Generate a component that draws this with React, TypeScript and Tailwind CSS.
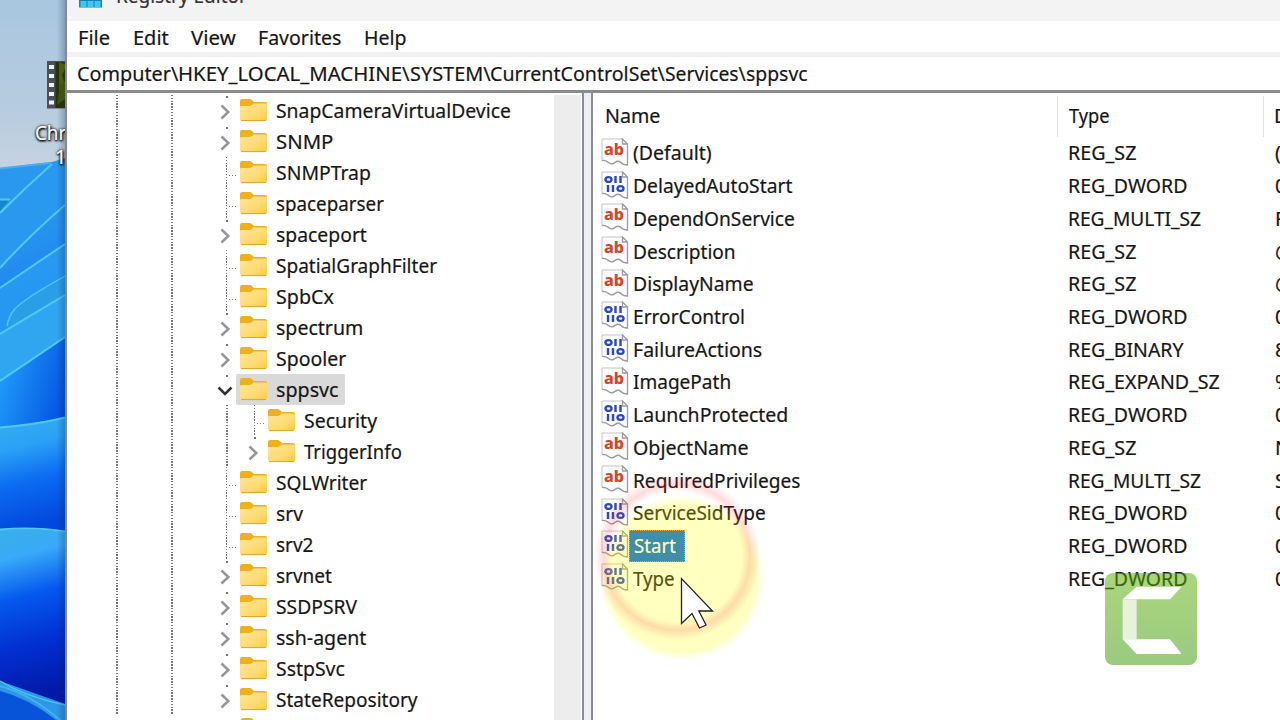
import { useLayoutEffect, useRef } from "react";
import clsx from "clsx";

type TreeItem = {
  label: string;
  width: number;
  state?: "closed" | "open";
  nested?: boolean;
  selected?: boolean;
};

const TREE: TreeItem[] = [
  { label: "SnapCameraVirtualDevice", width: 235, state: "closed" },
  { label: "SNMP", width: 57, state: "closed" },
  { label: "SNMPTrap", width: 95 },
  { label: "spaceparser", width: 108 },
  { label: "spaceport", width: 91, state: "closed" },
  { label: "SpatialGraphFilter", width: 161 },
  { label: "SpbCx", width: 58 },
  { label: "spectrum", width: 87, state: "closed" },
  { label: "Spooler", width: 70, state: "closed" },
  { label: "sppsvc", width: 63, state: "open", selected: true },
  { label: "Security", width: 73, nested: true },
  { label: "TriggerInfo", width: 98, state: "closed", nested: true },
  { label: "SQLWriter", width: 91 },
  { label: "srv", width: 27 },
  { label: "srv2", width: 37 },
  { label: "srvnet", width: 56, state: "closed" },
  { label: "SSDPSRV", width: 81, state: "closed" },
  { label: "ssh-agent", width: 90, state: "closed" },
  { label: "SstpSvc", width: 69, state: "closed" },
  { label: "StateRepository", width: 142, state: "closed" },
];

const TYPE_WIDTHS: Record<string, number> = {
  REG_SZ: 68,
  REG_DWORD: 119,
  REG_MULTI_SZ: 133,
  REG_EXPAND_SZ: 152,
  REG_BINARY: 116,
};

const VALUES = [
  { name: "(Default)", width: 79, type: "REG_SZ", data: "(" },
  { name: "DelayedAutoStart", width: 159, type: "REG_DWORD", data: "0" },
  { name: "DependOnService", width: 162, type: "REG_MULTI_SZ", data: "R" },
  { name: "Description", width: 103, type: "REG_SZ", data: "@" },
  { name: "DisplayName", width: 121, type: "REG_SZ", data: "@" },
  { name: "ErrorControl", width: 112, type: "REG_DWORD", data: "0" },
  { name: "FailureActions", width: 129, type: "REG_BINARY", data: "8" },
  { name: "ImagePath", width: 98, type: "REG_EXPAND_SZ", data: "%" },
  { name: "LaunchProtected", width: 155, type: "REG_DWORD", data: "0" },
  { name: "ObjectName", width: 116, type: "REG_SZ", data: "N" },
  { name: "RequiredPrivileges", width: 167, type: "REG_MULTI_SZ", data: "S" },
  { name: "ServiceSidType", width: 133, type: "REG_DWORD", data: "0" },
  { name: "Start", width: 42, type: "REG_DWORD", data: "0" },
  { name: "Type", width: 42, type: "REG_DWORD", data: "0" },
];

const MENU = [
  { label: "File", width: 32, space: "w-[55px]" },
  { label: "Edit", width: 36, space: "w-[58px]" },
  { label: "View", width: 45, space: "w-[67px]" },
  { label: "Favorites", width: 83, space: "w-[106px]" },
  { label: "Help", width: 43, space: "w-[43px]" },
];

const PATH = [
  { part: "Computer\\", width: 101 },
  { part: "HKEY_LOCAL_MACHINE\\", width: 232 },
  { part: "SYSTEM\\", width: 80.5 },
  { part: "CurrentControlSet\\", width: 174.5 },
  { part: "Services\\", width: 81 },
  { part: "sppsvc", width: 62 },
];

// Condenses a label horizontally so that it fills the given width
function FitText({ text, width }: { text: string; width: number }) {
  const ref = useRef<HTMLSpanElement>(null);

  useLayoutEffect(() => {
    const el = ref.current;
    if (!el) return;
    el.style.transform = `scaleX(${width / el.offsetWidth})`;
  }, [text, width]);

  return (
    <span className="block shrink-0" style={{ width }}>
      <span ref={ref} className="inline-block origin-left whitespace-pre">
        {text}
      </span>
    </span>
  );
}

function Wallpaper() {
  return (
    <svg
      className="absolute inset-0"
      width="65"
      height="720"
      viewBox="0 0 65 720"
    >
      <defs>
        <linearGradient id="sky" x1="0" y1="0" x2="0" y2="1">
          <stop offset="0" stopColor="#a9c6df" />
          <stop offset="0.15" stopColor="#b6cce0" />
          <stop offset="0.23" stopColor="#c6d2e0" />
        </linearGradient>
        <linearGradient id="petal" x1="0" y1="0" x2="0.3" y2="1">
          <stop offset="0" stopColor="#2b98ee" />
          <stop offset="1" stopColor="#2498f4" />
        </linearGradient>
        <linearGradient id="petalSoft" x1="0" y1="0" x2="0.4" y2="1">
          <stop offset="0" stopColor="#2b9fec" />
          <stop offset="1" stopColor="#1f86f0" />
        </linearGradient>
        <linearGradient id="deep" x1="0" y1="0.4" x2="1" y2="0.8">
          <stop offset="0" stopColor="#209cfa" />
          <stop offset="1" stopColor="#0452e0" />
        </linearGradient>
        <linearGradient id="fold" x1="0" y1="0" x2="0.15" y2="1">
          <stop offset="0" stopColor="#36b0ee" />
          <stop offset="0.3" stopColor="#2ba0f6" />
          <stop offset="0.6" stopColor="#0c6cf2" />
          <stop offset="1" stopColor="#0348dc" />
        </linearGradient>
        <linearGradient id="foldDeep" x1="0" y1="0" x2="0.1" y2="1">
          <stop offset="0" stopColor="#3aafe6" />
          <stop offset="0.18" stopColor="#39aaf8" />
          <stop offset="0.42" stopColor="#0558ee" />
          <stop offset="0.7" stopColor="#0230d0" />
          <stop offset="1" stopColor="#0219a8" />
        </linearGradient>
        <linearGradient id="shade" x1="0" y1="0" x2="1" y2="0">
          <stop offset="0" stopColor="#0a2040" stopOpacity="0" />
          <stop offset="1" stopColor="#0a2040" stopOpacity="0.25" />
        </linearGradient>
      </defs>
      <rect width="65" height="720" fill="url(#sky)" />
      <path d="M0 168 L52 162 L65 158 V720 H0Z" fill="url(#petal)" />
      <path d="M0 199 H10 L0 211Z" fill="#1486cc" />
      <path d="M65 205 L0 268 V288 L65 244Z" fill="url(#petalSoft)" />
      <path d="M65 244 L0 288 V334 L65 295Z" fill="url(#petal)" />
      <path d="M65 276 Q18 300 12 312 Q8 318 7 330 L65 295Z" fill="#2a9fe8" />
      <path d="M65 295 L0 334 V381 L65 337Z" fill="#30a6f0" />
      <path d="M65 337 L0 381 V428 L65 418Z" fill="url(#deep)" />
      <path d="M0 428 Q40 424 65 418 V532 H0Z" fill="url(#fold)" />
      <path d="M0 530 Q35 527 65 532 V704 L0 681Z" fill="url(#foldDeep)" />
      <path d="M0 681 Q20 692 65 704 V720 H0Z" fill="#2f96e6" />
      <path d="M0 691 Q28 698 56 720 H0Z" fill="#0754d8" />
      <g fill="none" stroke="#50c8f6" strokeWidth="2">
        <path d="M0 168.5 L50 163" stroke="#45b2f0" />
        <path d="M0 199.5 H10" />
        <path d="M52 164 Q26 187 0 213" />
        <path d="M65 205 Q28 237 0 268" />
        <path d="M65 244 L0 288" />
        <path d="M65 276 Q22 300 14 310 Q9 316 7 326" strokeWidth="1.4" />
        <path d="M65 295 L0 334" />
        <path d="M65 337 L0 381" />
        <path d="M0 427.5 Q40 424 65 417.5" />
        <path d="M0 529.5 Q35 526.5 65 531.5" />
        <path d="M0 681 Q24 696 65 705" strokeWidth="1.4" />
        <path d="M0 686 Q30 694 60 720" strokeWidth="2" stroke="#3fb2ee" />
      </g>
      <rect x="57" width="8" height="720" fill="url(#shade)" />
    </svg>
  );
}

function DesktopIcon() {
  return (
    <div className="absolute left-[35px] top-[61px] w-[30px] text-white [text-shadow:1px_1px_3px_#000,0_0_3px_#000,0_1px_2px_#000]">
      <svg className="ml-3" width="36" height="48" viewBox="0 0 36 48">
        <rect width="36" height="47.5" fill="#4a5054" />
        <rect x="8.5" y="1" width="28" height="46" fill="#27330c" />
        <path d="M12 1 L20 4 L15 14 L18 24 L12 30Z" fill="#4c5c12" />
        <path d="M13 24 L18 20 V38 L10 44Z" fill="#3f520f" />
        {[4, 13, 22, 31, 39.5].map((y) => (
          <rect key={y} x="2" y={y} width="5" height="4" fill="#f4f4f4" />
        ))}
      </svg>
      <div className="mt-3 h-6 leading-6">
        <FitText text="Chr" width={31} />
      </div>
      <div className="ml-5 h-6 leading-6">1</div>
    </div>
  );
}

function Folder() {
  return (
    <svg
      className="-mt-[2px] ml-[2.5px] shrink-0"
      width="29"
      height="24"
      viewBox="0 0 29 24"
    >
      <defs>
        <linearGradient id="folder" x1="0" y1="0" x2="1" y2="1">
          <stop offset="0" stopColor="#ffe59a" />
          <stop offset="0.6" stopColor="#fedb72" />
          <stop offset="1" stopColor="#fbc93c" />
        </linearGradient>
      </defs>
      <path
        d="M1 3 Q1 1 3 1 H10.5 Q12 1 13 2.2 L15 4 H26 Q28 4 28 6 V14 H1Z"
        fill="#f0b01e"
      />
      <path
        d="M1 9 Q1 8 2.5 8 H10.5 Q12 8 13 7 L14.5 5.5 H26.5 Q28 5.5 28 7 V21 Q28 23 26 23 H3 Q1 23 1 21Z"
        fill="url(#folder)"
      />
      <path d="M2 22.6 H27" stroke="#dba52a" strokeWidth="1" />
    </svg>
  );
}

function Chevron({ open }: { open: boolean }) {
  return (
    <svg className="mt-[3px]" width="18" height="18" viewBox="0 0 18 18">
      {open ? (
        <path
          d="M2.5 5.5 L9 12 L15.5 5.5"
          fill="none"
          stroke="#333"
          strokeWidth="2.5"
        />
      ) : (
        <path
          d="M5.5 2.5 L12.3 9 L5.5 15.5"
          fill="none"
          stroke="#979797"
          strokeWidth="2.5"
        />
      )}
    </svg>
  );
}

const V_DOTS =
  "bg-[repeating-linear-gradient(to_bottom,#777_0_1.4px,transparent_1.4px_2.82px)]";
const H_DOTS =
  "bg-[repeating-linear-gradient(to_right,#777_0_1.4px,transparent_1.4px_2.82px)]";

function Branch({ state }: { state?: "closed" | "open" }) {
  if (state) {
    return (
      <div className="relative flex h-full w-[20px] items-center">
        <span className="absolute left-[10px] top-px h-[1.5px] w-[1.5px] bg-[#777]" />
        <Chevron open={state === "open"} />
      </div>
    );
  }
  return (
    <div className="flex h-full w-[20px] items-center pl-[10px]">
      <div className={clsx("h-full w-[1.5px]", V_DOTS)} />
      <div className={clsx("ml-[1.5px] mt-[6px] h-[1.5px] w-[8px]", H_DOTS)} />
    </div>
  );
}

function TreeRow({ item }: { item: TreeItem }) {
  return (
    <div className="flex h-[31px] shrink-0 items-center">
      <div className={clsx("ml-[49px] h-full w-[1.5px]", V_DOTS)} />
      <div className={clsx("ml-[53.5px] h-full w-[1.5px]", V_DOTS)} />
      <div className="flex h-full shrink-0 pl-[43.5px]">
        {item.nested && (
          <div className="h-full w-[28px] pl-[10px]">
            <div className={clsx("h-full w-[1.5px]", V_DOTS)} />
          </div>
        )}
        <Branch state={item.state} />
      </div>
      <div
        className={clsx(
          "flex h-[31px] items-center rounded-xs pr-[6px]",
          item.selected && "bg-[#d9d9d9]",
        )}
      >
        <Folder />
        <span className="ml-[8px]">
          <FitText text={item.label} width={item.width} />
        </span>
      </div>
    </div>
  );
}

function StringGlyph() {
  return (
    <text
      x="3"
      y="17"
      textLength="20"
      lengthAdjust="spacingAndGlyphs"
      fontSize="16"
      fontWeight="800"
      fill="#d5472a"
    >
      ab
    </text>
  );
}

function BinaryGlyph() {
  return (
    <g fill="none" stroke="#2b49c4" strokeWidth="2.4">
      <ellipse cx="7.5" cy="8.5" rx="3" ry="2.4" />
      <path d="M14.5 5 V12 M19.5 5 V12" />
      <path d="M7 14 V21 M12 14 V21" />
      <ellipse cx="19.5" cy="17.5" rx="3" ry="2.4" />
    </g>
  );
}

function ValueIcon({ type }: { type: string }) {
  const isBinary = type === "REG_DWORD" || type === "REG_BINARY";
  return (
    <svg className="-mt-[2px] shrink-0" width="28" height="29" viewBox="0 0 28 29">
      <path
        d="M1 1 H21.5 L26.5 6 V27 Q22 27 20 24.5 Q17 22 14 24.5 Q11 27 8 25 Q5 22 1 22.5Z"
        fill="#fcfcfc"
        stroke="#c4c4c4"
        strokeWidth="1"
      />
      <path
        d="M1 22.5 Q5 22 8 24.8 Q11 27 14 24.5 Q17 22 20 24.5 Q22 27 26.5 27 V6 L21.5 1 V6 H26.5"
        fill="none"
        stroke="#9c9c9c"
        strokeWidth="1.3"
      />
      {isBinary ? <BinaryGlyph /> : <StringGlyph />}
    </svg>
  );
}

function ClickHighlight() {
  return (
    <svg
      className="absolute left-[580px] top-[470px]"
      width="200"
      height="200"
      viewBox="580 470 200 200"
    >
      <defs>
        <radialGradient id="glow">
          <stop offset="0" stopColor="#ffff00" stopOpacity="0.25" />
          <stop offset="0.88" stopColor="#ffff00" stopOpacity="0.25" />
          <stop offset="1" stopColor="#ffff00" stopOpacity="0" />
        </radialGradient>
        <radialGradient id="ring">
          <stop offset="0.78" stopColor="#ff3030" stopOpacity="0" />
          <stop offset="0.88" stopColor="#ff3030" stopOpacity="0.17" />
          <stop offset="1" stopColor="#ff3030" stopOpacity="0" />
        </radialGradient>
      </defs>
      <circle cx="682" cy="578" r="83" fill="url(#glow)" />
      <circle cx="677" cy="557" r="83" fill="url(#ring)" />
      <path
        d="M681.5 578.5 V623.5 L692 613.5 L699.5 628 L706 625 L698.8 611 H712.5Z"
        fill="#fff"
        stroke="#222"
        strokeWidth="1.3"
      />
    </svg>
  );
}

function CamtasiaMark() {
  return (
    <svg
      className="absolute left-[1105px] top-[573px]"
      width="92"
      height="92"
      viewBox="0 0 276 276"
    >
      <defs>
        <linearGradient id="mark" x1="0" y1="0" x2="0" y2="1">
          <stop offset="0" stopColor="#5cb000" stopOpacity="0.52" />
          <stop offset="1" stopColor="#359600" stopOpacity="0.5" />
        </linearGradient>
      </defs>
      <rect width="276" height="276" rx="24" fill="url(#mark)" />
      <path d="M95 41 H230 L195 79 H53Z" fill="#fff" />
      <path d="M53 79 H95 V199 H53Z" fill="#e6f2dc" />
      <path d="M53 199 H195 L230 243 H95Z" fill="#fff" />
    </svg>
  );
}

function RegeditIcon() {
  return (
    <svg width="24" height="24" viewBox="0 0 24 24">
      <rect width="23" height="23.5" fill="#1683b4" />
      {[1.5, 8.5, 15.5].map((x) =>
        [2, 9.5, 17].map((y) => (
          <rect
            key={`${x}-${y}`}
            x={x}
            y={y}
            width="6"
            height="6"
            fill="#3cc8f4"
          />
        )),
      )}
    </svg>
  );
}

export default function App() {
  return (
    <div className="relative flex h-[720px] w-[1280px] overflow-hidden bg-white font-['Noto_Sans','Open_Sans',sans-serif] text-[20px] leading-[28px] text-[#161616] [-webkit-text-stroke:0.2px]">
      <aside className="relative w-[65px] shrink-0 overflow-hidden">
        <Wallpaper />
        <DesktopIcon />
      </aside>

      <main className="flex min-w-0 flex-1 flex-col border-l-2 border-[#85898f]">
        <header className="flex h-[21px] shrink-0 items-end overflow-hidden bg-[#f3f3f3] pl-3">
          <div className="mb-[13px] h-6">
            <RegeditIcon />
          </div>
          <div className="mb-[11px] ml-[13px] text-[#333]">
            <FitText text="Registry Editor" width={131} />
          </div>
        </header>

        <nav className="flex h-[31px] shrink-0 items-center pl-[11px]">
          {MENU.map((entry) => (
            <div
              key={entry.label}
              className={clsx("shrink-0 pt-[3px]", entry.space)}
            >
              <FitText text={entry.label} width={entry.width} />
            </div>
          ))}
        </nav>

        <div className="flex h-[41px] shrink-0 items-center border-b-3 border-t-5 border-b-[#8a8c8c] border-t-[#f1f1f1] pl-[9.5px] pt-px">
          {PATH.map(({ part, width }) => (
            <FitText key={part} text={part} width={width} />
          ))}
        </div>

        <div className="flex min-h-0 flex-1">
          <section className="flex w-[515px] shrink-0 overflow-hidden">
            <div className="flex w-[487px] shrink-0 flex-col overflow-hidden pt-[2px]">
              {TREE.map((item) => (
                <TreeRow key={item.label} item={item} />
              ))}
              {/* top edge of the next row's folder */}
              <div className="ml-[172.5px] mt-[3px] h-2 w-[14px] shrink-0 rounded-t-sm bg-[#f0b01e]" />
            </div>
            <div className="mt-[2px] w-[27px] bg-[#ededed]" />
          </section>
          <div className="w-[11px] shrink-0 border-x-2 border-x-[#8b8c94] bg-[#eeeff5]" />

          <section className="min-w-0 flex-1 overflow-hidden pt-[3px]">
            <div className="flex h-[41px] items-center">
              <div className="-mt-[2px] w-[464px] shrink-0 pl-[12px]">
                <FitText text="Name" width={55} />
              </div>
              <div className="flex h-full w-[206px] shrink-0 items-center border-l border-[#e2e2e2] pb-[2px] pl-[11px]">
                <FitText text="Type" width={41} />
              </div>
              <div className="flex h-full items-center border-l border-[#e2e2e2] pb-[2px] pl-[10px]">
                D
              </div>
            </div>
            {VALUES.map((value) => (
              <div key={value.name} className="flex h-[32.73px] items-center">
                <div className="flex w-[475px] shrink-0 items-center pl-[8px]">
                  <ValueIcon type={value.type} />
                  <div
                    className={clsx(
                      "flex h-[32px] items-center pl-[3.5px] pr-[8px]",
                      value.name === "Start" &&
                        "border border-dotted border-[#e0903c] bg-[#0067e0] pl-[2.5px] text-white",
                    )}
                  >
                    <FitText text={value.name} width={value.width} />
                  </div>
                </div>
                <div className="w-[207px] shrink-0">
                  <FitText text={value.type} width={TYPE_WIDTHS[value.type]} />
                </div>
                <div className="shrink-0">{value.data}</div>
              </div>
            ))}
          </section>
        </div>
      </main>

      <ClickHighlight />
      <CamtasiaMark />
    </div>
  );
}
